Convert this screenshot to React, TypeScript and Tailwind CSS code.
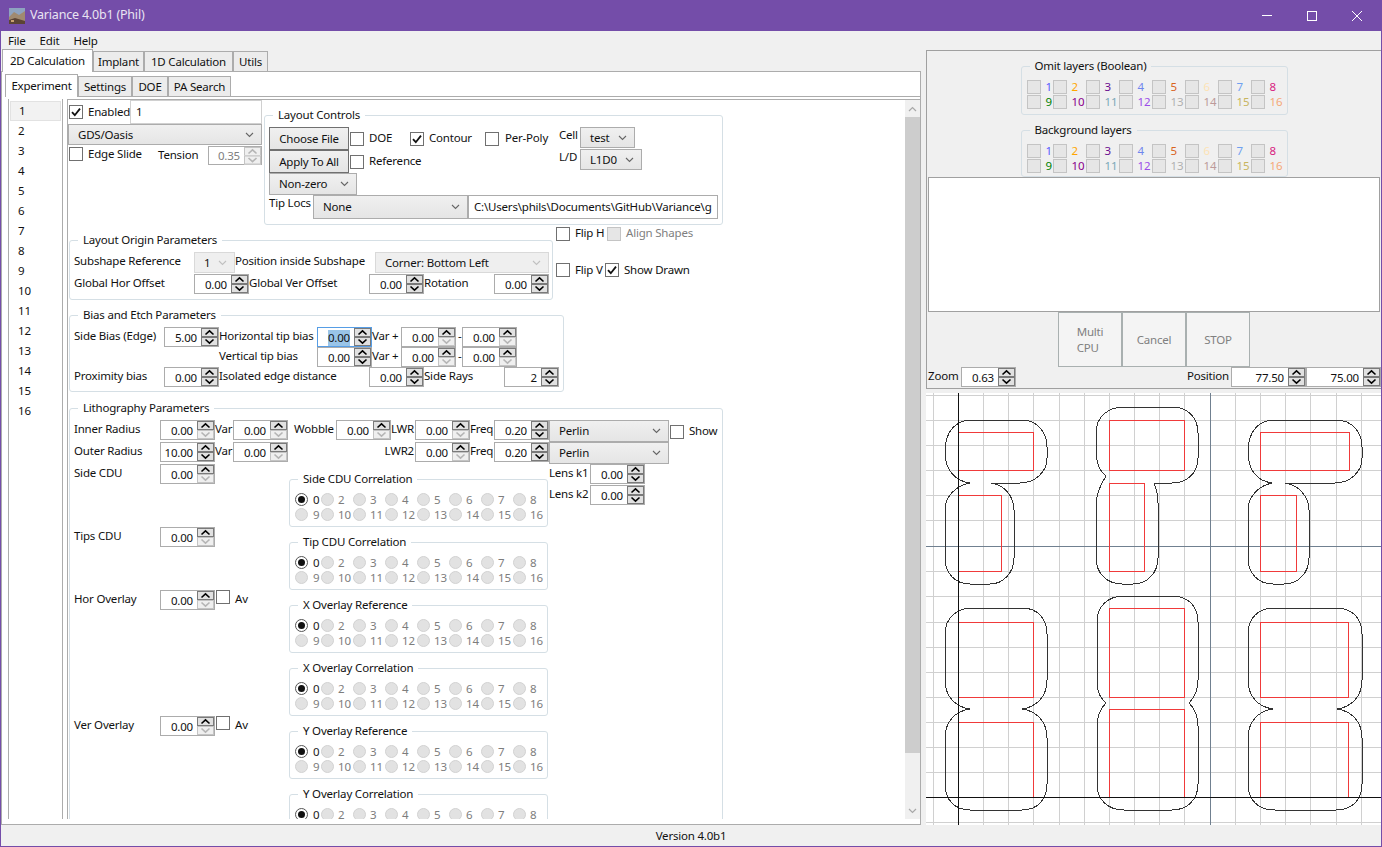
import type { ReactNode } from 'react';

type SpinState = 'on' | 'half' | 'off';

const layerColors = [
  '#5a5aff', '#ffa500', '#6a0d91', '#6f86ee', '#d9641e', '#fde3b5', '#6fa0f0', '#d81b80',
  '#008000', '#8b008b', '#7ba8b8', '#9b4de8', '#b0b0b0', '#bc9a9a', '#c8b560', '#f5a878',
];

const radioLabels = [0, 2, 3, 4, 5, 6, 7, 8, 9, 10, 11, 12, 13, 14, 15, 16];

function Lbl({ children, className = '', top = 'mt-px' }: { children: ReactNode; className?: string; top?: string }) {
  return <span className={`block shrink-0 whitespace-nowrap leading-[16px] ${top} ${className}`}>{children}</span>;
}

function Chevron({ color = '#000', width = 1.6 }: { color?: string; width?: number }) {
  return (
    <svg width="11" height="7" viewBox="0 0 11 7">
      <path d="M1.5 5.5 L5.5 1.8 L9.5 5.5" fill="none" stroke={color} strokeWidth={width} />
    </svg>
  );
}

function Spin({
  value = '0.00',
  state = 'on',
  className = 'w-[55px] h-[20px]',
  selected = false,
}: {
  value?: string;
  state?: SpinState;
  className?: string;
  selected?: boolean;
}) {
  const upOn = state !== 'off';
  const downOn = state === 'on';
  return (
    <div className={`flex shrink-0 border bg-white ${selected ? 'border-[#569de5]' : 'border-[#acacac]'} ${className}`}>
      <div className={`flex flex-1 items-center justify-end pr-[1px] pt-[1px] ${state === 'off' ? 'text-[#808080]' : ''}`}>
        <span className={selected ? 'mr-[3px] bg-[#99c4e8] leading-[16px]' : 'px-[3px] leading-[16px]'}>{value}</span>
      </div>
      <div className="flex w-[17px] flex-col">
        <div className={`flex h-1/2 items-center justify-center border ${upOn ? 'border-[#7a7a7a] bg-[#e1e1e1]' : 'border-[#c4c4c4] bg-[#efefef]'}`}>
          <Chevron color={upOn ? '#000' : '#b5b5b5'} />
        </div>
        <div className={`flex h-1/2 rotate-180 items-center justify-center border ${downOn ? 'border-[#7a7a7a] bg-[#e1e1e1]' : 'border-[#c4c4c4] bg-[#efefef]'}`}>
          <Chevron color={downOn ? '#000' : '#b5b5b5'} />
        </div>
      </div>
    </div>
  );
}

function Check({ checked = false, disabled = false, className = '' }: { checked?: boolean; disabled?: boolean; className?: string }) {
  return (
    <span className={`flex h-[14px] w-[14px] shrink-0 items-center justify-center border ${disabled ? 'border-[#c4c4c4] bg-[#e6e6e6]' : 'border-[#707070] bg-white'} ${className}`}>
      {checked && (
        <svg width="12" height="12" viewBox="0 0 12 12">
          <path d="M2 6.2 L4.8 9.2 L10 2.6" fill="none" stroke="#111" strokeWidth="1.8" />
        </svg>
      )}
    </span>
  );
}

function Combo({ label, className, disabled = false }: { label: string; className: string; disabled?: boolean }) {
  return (
    <div className={`flex shrink-0 items-center justify-between pl-[9px] pr-[7px] ${disabled ? 'border border-[#d9d9d9] bg-[#efefef]' : 'border border-[#acacac] bg-gradient-to-b from-[#f0f0f0] to-[#e5e5e5]'} ${className}`}>
      <span className="whitespace-nowrap">{label}</span>
      <svg width="9" height="6" viewBox="0 0 9 6">
        <path d="M1 1 L4.5 4.5 L8 1" fill="none" stroke={disabled ? '#c0c0c0' : '#666'} strokeWidth="1.1" />
      </svg>
    </div>
  );
}

function Btn({ children }: { children: ReactNode }) {
  return (
    <div className="flex h-[23px] w-[80px] shrink-0 items-center justify-center border border-[#707070] bg-gradient-to-b from-[#f0f0f0] to-[#e5e5e5]">
      {children}
    </div>
  );
}

function Group({ title, className, children }: { title: string; className: string; children: ReactNode }) {
  return (
    <div className={`relative shrink-0 rounded-[3px] border border-[#d5dfe5] ${className}`}>
      <span className="absolute left-[8px] top-[-9px] whitespace-nowrap bg-inherit px-[5px] leading-[16px]">{title}</span>
      {children}
    </div>
  );
}

function Radio({ checked = false }: { checked?: boolean }) {
  return (
    <span className={`flex h-[13px] w-[13px] shrink-0 items-center justify-center rounded-full border ${checked ? 'border-[#555] bg-white' : 'border-[#d2d2d2] bg-[#e2e2e2]'}`}>
      {checked && <span className="h-[7px] w-[7px] rounded-full bg-[#111]" />}
    </span>
  );
}

function RadioGroup({ title }: { title: string }) {
  return (
    <Group title={title} className="h-[48px] w-[259px] bg-white">
      <div className="grid grid-cols-[26px_repeat(7,32px)] grid-rows-[15px_15px] pl-[5px] pt-[12px]">
        {radioLabels.map((n, i) => (
          <div key={n} className="flex items-center">
            <Radio checked={i === 0} />
            <span className={`leading-[15px] ${i === 0 || i === 8 ? 'ml-[5px]' : 'ml-[4px]'} ${i === 0 ? 'text-[#222]' : 'text-[#7d7d7d]'}`}>{n}</span>
          </div>
        ))}
      </div>
    </Group>
  );
}

function LayerGroup({ title, className }: { title: string; className: string }) {
  return (
    <Group title={title} className={`w-[267px] bg-[#f0f0f0] ${className}`}>
      <div className="grid grid-cols-[26px_repeat(7,33px)] grid-rows-[15px_15px] pl-[5px] pt-[12px]">
        {layerColors.map((c, i) => (
          <div key={c} className="flex items-center">
            <Check disabled />
            <span style={{ color: c }} className="ml-[5px] leading-[15px]">{i + 1}</span>
          </div>
        ))}
      </div>
    </Group>
  );
}

function Tab({ label, active = false, className = '' }: { label: string; active?: boolean; className?: string }) {
  return (
    <div className={`flex shrink-0 items-center justify-center border border-b-0 border-[#acacac] ${active ? 'z-10 mb-[-1px] bg-white' : 'bg-[#ececec]'} ${className}`}>
      {label}
    </div>
  );
}

function TipBiasRow({ label, selected = false }: { label: string; selected?: boolean }) {
  return (
    <>
      <Lbl className="w-[98px]">{label}</Lbl>
      <Spin selected={selected} />
      <Lbl className="w-[29px]">Var +</Lbl>
      <Spin state="half" />
      <Lbl className="w-[6px] pl-[2px]">-</Lbl>
      <Spin state="half" />
    </>
  );
}

const gridX = [933, 958, 983, 1008, 1033, 1059, 1084, 1109, 1134, 1159, 1184, 1210, 1235, 1260, 1285, 1310, 1336, 1361];
const gridY = [395, 420, 445, 470, 495, 520, 546, 571, 596, 622, 647, 672, 697, 722, 747, 772, 797, 822];

const outlines = [
  'M970 483 C955 481 945 470 945 452 C945 432 955 420 972 420 L1022 420 C1037 420 1047 432 1047 447 L1047 458 C1047 472 1035 483 1020 483 L991 483 C1005 485 1014 497 1014 510 L1014 558 C1014 573 1003 584 990 584 L970 584 C955 584 945 573 945 558 L945 510 C945 497 955 486 970 483 Z',
  'M1106 476 C1098 470 1096 460 1096 450 L1096 433 C1096 417 1108 407 1124 407 L1172 407 C1188 407 1198 418 1198 433 L1198 458 C1198 473 1187 483 1172 483 L1154 483 C1157 490 1158 495 1158 503 L1158 558 C1158 573 1147 584 1133 584 L1122 584 C1107 584 1096 573 1096 558 L1096 505 C1096 495 1099 487 1106 476 Z',
  'M1272 483 C1257 481 1248 470 1248 452 C1248 432 1258 420 1275 420 L1336 420 C1352 420 1362 432 1362 447 L1362 458 C1362 472 1350 483 1335 483 L1285 483 C1299 485 1309 497 1309 510 L1309 558 C1309 573 1298 584 1284 584 L1273 584 C1258 584 1248 573 1248 558 L1248 510 C1248 497 1258 486 1272 483 Z',
  'M970 709 C955 707 945 696 945 680 L945 634 C945 618 957 608 972 608 L1022 608 C1037 608 1047 618 1047 634 L1047 680 C1047 696 1037 707 1022 709 C1037 711 1047 722 1047 738 L1047 784 C1047 800 1037 810 1022 810 L970 810 C955 810 945 800 945 784 L945 738 C945 722 955 711 970 709 Z',
  'M1106 703 C1098 696 1097 688 1097 680 L1097 622 C1097 606 1108 596 1124 596 L1172 596 C1188 596 1198 606 1198 622 L1198 680 C1198 688 1196 696 1189 703 C1196 710 1198 718 1198 726 L1198 784 C1198 800 1187 810 1172 810 L1124 810 C1108 810 1097 800 1097 784 L1097 726 C1097 718 1099 710 1106 703 Z',
  'M1273 709 C1258 707 1248 696 1248 680 L1248 634 C1248 618 1258 608 1275 608 L1336 608 C1352 608 1362 618 1362 634 L1362 680 C1362 696 1352 707 1337 709 C1352 711 1362 722 1362 738 L1362 784 C1362 800 1352 810 1336 810 L1275 810 C1258 810 1248 800 1248 784 L1248 738 C1248 722 1258 711 1273 709 Z',
];

const redRects = [
  [958, 432, 75, 38], [958, 495, 43, 76], [1109, 420, 75, 50], [1109, 483, 35, 88], [1260, 432, 89, 38], [1260, 495, 36, 76],
  [958, 622, 75, 75], [958, 722, 75, 75], [1109, 608, 75, 89], [1109, 709, 75, 88], [1260, 622, 88, 75], [1260, 722, 88, 75],
];

function Viewport() {
  return (
    <svg viewBox="926 393 455 432" className="block h-[432px] w-[455px] bg-white" shapeRendering="crispEdges">
      {gridX.map((x) => (
        <line key={x} x1={x + 0.5} x2={x + 0.5} y1={393} y2={825} stroke="#d0d0d0" />
      ))}
      {gridY.map((y) => (
        <line key={y} x1={926} x2={1381} y1={y + 0.5} y2={y + 0.5} stroke="#d0d0d0" />
      ))}
      <line x1={1210.5} x2={1210.5} y1={393} y2={825} stroke="#708090" />
      <line x1={926} x2={1381} y1={546.5} y2={546.5} stroke="#708090" />
      {redRects.map(([x, y, w, h]) => (
        <rect key={`${x}-${y}`} x={x + 0.5} y={y + 0.5} width={w} height={h} fill="none" stroke="#f03a3a" />
      ))}
      {outlines.map((d) => (
        <path key={d} d={d} fill="none" stroke="#333" />
      ))}
      <line x1={958.5} x2={958.5} y1={393} y2={825} stroke="#111" />
      <line x1={926} x2={1381} y1={797.5} y2={797.5} stroke="#111" />
    </svg>
  );
}

function Form() {
  return (
    <div className="flex-1 overflow-hidden">
      {/* top block */}
      <div className="flex h-[125px]">
        <div className="w-[196px] shrink-0">
          <div className="flex h-[24px]">
            <Check checked className="ml-px mt-[5px]" />
            <Lbl top="mt-[4px]" className="ml-[5px] w-[42px]">Enabled</Lbl>
            <div className="flex h-[24px] w-[132px] items-center border border-[#d0d0d0] bg-white pl-[5px]">1</div>
          </div>
          <Combo label="GDS/Oasis" className="h-[21px] w-[194px]" />
          <div className="flex h-[20px]">
            <Check className="ml-px mt-[2px]" />
            <Lbl className="ml-[5px] w-[70px]">Edge Slide</Lbl>
            <Lbl top="mt-[2px]" className="w-[50px]">Tension</Lbl>
            <Spin value="0.35" state="off" className="mt-px h-[19px] w-[54px]" />
          </div>
        </div>
        <Group title="Layout Controls" className="mt-[15px] h-[110px] w-[459px] bg-white">
          <div className="pl-[4px] pt-[11px]">
            <div className="flex h-[23px]">
              <Btn>Choose File</Btn>
              <Check className="ml-px mt-[5px]" />
              <Lbl top="mt-[3px]" className="ml-[5px] w-[41px]">DOE</Lbl>
              <Check checked className="mt-[5px]" />
              <Lbl top="mt-[3px]" className="ml-[5px] w-[56px]">Contour</Lbl>
              <Check className="mt-[5px]" />
              <Lbl top="mt-[3px]" className="ml-[6px] w-[54px]">Per-Poly</Lbl>
              <Lbl top="mt-0" className="w-[21px]">Cell</Lbl>
              <Combo label="test" className="h-[21px] w-[55px]" />
            </div>
            <div className="flex h-[23px]">
              <Btn>Apply To All</Btn>
              <Check className="ml-px mt-[5px]" />
              <Lbl top="mt-[3px]" className="ml-[5px] w-[190px]">Reference</Lbl>
              <Lbl top="mt-[-1px]" className="w-[21px]">L/D</Lbl>
              <Combo label="L1D0" className="mt-[-1px] h-[21px] w-[62px]" />
            </div>
            <Combo label="Non-zero" className="h-[22px] w-[88px]" />
            <div className="flex h-[24px]">
              <Lbl top="mt-0" className="w-[44px]">Tip Locs</Lbl>
              <Combo label="None" className="h-[24px] w-[155px]" />
              <div className="flex h-[24px] w-[250px] items-center overflow-hidden whitespace-nowrap border border-[#acacac] bg-white pl-[5px]">
                {'C:\\Users\\phils\\Documents\\GitHub\\Variance\\g'}
              </div>
            </div>
          </div>
        </Group>
      </div>

      {/* layout origin */}
      <div className="flex h-[75px]">
        <Group title="Layout Origin Parameters" className="ml-px mt-[15px] h-[60px] w-[484px] bg-white">
          <div className="pl-[4px] pt-[11px]">
            <div className="flex h-[21px]">
              <Lbl className="w-[120px]">Subshape Reference</Lbl>
              <Combo disabled label="1" className="h-[21px] w-[41px]" />
              <Lbl className="w-[140px]">Position inside Subshape</Lbl>
              <Combo disabled label="Corner: Bottom Left" className="h-[21px] w-[174px]" />
            </div>
            <div className="mt-px flex h-[20px]">
              <Lbl className="w-[120px]">Global Hor Offset</Lbl>
              <Spin />
              <Lbl className="w-[120px]">Global Ver Offset</Lbl>
              <Spin />
              <Lbl className="w-[70px]">Rotation</Lbl>
              <Spin />
            </div>
          </div>
        </Group>
        <div className="ml-[3px]">
          <div className="flex h-[37px] pt-px">
            <Check className="mt-[1px]" />
            <Lbl top="mt-[-1px]" className="ml-[5px] w-[32px]">Flip H</Lbl>
            <Check disabled className="mt-[1px]" />
            <Lbl top="mt-[-1px]" className="ml-[5px] text-[#808080]">Align Shapes</Lbl>
          </div>
          <div className="flex">
            <Check className="mt-[1px]" />
            <Lbl top="mt-0" className="ml-[5px] w-[30px]">Flip V</Lbl>
            <Check checked className="mt-[1px]" />
            <Lbl top="mt-0" className="ml-[5px]">Show Drawn</Lbl>
          </div>
        </div>
      </div>

      {/* bias */}
      <Group title="Bias and Etch Parameters" className="ml-px mt-[15px] h-[77px] w-[495px] bg-white">
        <div className="pl-[4px] pt-[11px]">
          <div className="flex h-[20px]">
            <Lbl className="w-[90px]">Side Bias (Edge)</Lbl>
            <Spin value="5.00" />
            <TipBiasRow label="Horizontal tip bias" selected />
          </div>
          <div className="ml-[145px] flex h-[20px]">
            <TipBiasRow label="Vertical tip bias" />
          </div>
          <div className="flex h-[20px]">
            <Lbl className="w-[90px]">Proximity bias</Lbl>
            <Spin />
            <Lbl className="w-[150px]">Isolated edge distance</Lbl>
            <Spin />
            <Lbl className="w-[80px]">Side Rays</Lbl>
            <Spin value="2" />
          </div>
        </div>
      </Group>

      {/* lithography */}
      <Group title="Lithography Parameters" className="ml-px mt-[16px] h-[520px] w-[654px] bg-white">
        <div className="pl-[4px] pt-[11px]">
          <div className="flex h-[22px]">
            <Lbl className="w-[86px]">Inner Radius</Lbl>
            <Spin state="half" />
            <Lbl className="w-[18px]">Var</Lbl>
            <Spin state="half" />
            <Lbl className="ml-[6px] w-[42px]">Wobble</Lbl>
            <Spin state="half" />
            <Lbl className="w-[24px]">LWR</Lbl>
            <Spin state="half" />
            <Lbl className="w-[24px]">Freq</Lbl>
            <Spin value="0.20" />
            <Combo label="Perlin" className="h-[22px] w-[120px]" />
            <Check className="ml-px mt-[5px]" />
            <Lbl top="mt-[3px]" className="ml-[5px]">Show</Lbl>
          </div>
          <div className="flex h-[22px]">
            <Lbl className="w-[86px]">Outer Radius</Lbl>
            <Spin value="10.00" />
            <Lbl className="w-[18px]">Var</Lbl>
            <Spin state="half" />
            <Lbl className="w-[127px] pr-px text-right">LWR2</Lbl>
            <Spin state="half" />
            <Lbl className="w-[24px]">Freq</Lbl>
            <Spin value="0.20" />
            <Combo label="Perlin" className="h-[22px] w-[120px]" />
          </div>
          <div className="flex">
            <div className="w-[215px] shrink-0">
              <div className="flex h-[20px]">
                <Lbl className="w-[86px]">Side CDU</Lbl>
                <Spin state="half" />
              </div>
              <div className="mt-[43px] flex h-[20px]">
                <Lbl className="w-[86px]">Tips CDU</Lbl>
                <Spin state="half" />
              </div>
              <div className="mt-[43px] flex h-[20px]">
                <Lbl className="w-[86px]">Hor Overlay</Lbl>
                <Spin state="half" />
                <Check className="ml-px" />
                <Lbl className="ml-[5px]">Av</Lbl>
              </div>
              <div className="mt-[106px] flex h-[20px]">
                <Lbl className="w-[86px]">Ver Overlay</Lbl>
                <Spin state="half" />
                <Check className="ml-px" />
                <Lbl className="ml-[5px]">Av</Lbl>
              </div>
            </div>
            <div className="flex w-[260px] shrink-0 flex-col gap-[15px] pt-[15px]">
              <RadioGroup title="Side CDU Correlation" />
              <RadioGroup title="Tip CDU Correlation" />
              <RadioGroup title="X Overlay Reference" />
              <RadioGroup title="X Overlay Correlation" />
              <RadioGroup title="Y Overlay Reference" />
              <RadioGroup title="Y Overlay Correlation" />
            </div>
            <div>
              <div className="flex h-[21px]">
                <Lbl className="w-[41px]">Lens k1</Lbl>
                <Spin />
              </div>
              <div className="flex h-[20px]">
                <Lbl className="w-[41px]">Lens k2</Lbl>
                <Spin />
              </div>
            </div>
          </div>
        </div>
      </Group>
    </div>
  );
}

function Scrollbar() {
  return (
    <div className="flex w-[15px] shrink-0 flex-col bg-[#f0f0f0]">
      <div className="flex h-[17px] items-center justify-center">
        <svg width="9" height="6" viewBox="0 0 9 6">
          <path d="M1 5 L4.5 1.5 L8 5" fill="none" stroke="#a8a8a8" strokeWidth="1.2" />
        </svg>
      </div>
      <div className="h-[636px] bg-[#cdcdcd]" />
      <div className="flex-1" />
      <div className="flex h-[17px] items-center justify-center">
        <svg width="9" height="6" viewBox="0 0 9 6">
          <path d="M1 1 L4.5 4.5 L8 1" fill="none" stroke="#a8a8a8" strokeWidth="1.2" />
        </svg>
      </div>
    </div>
  );
}

export default function App() {
  return (
    <div className="flex h-[847px] w-[1382px] flex-col overflow-hidden border-x border-b border-[#744da9] bg-[#f0f0f0] font-['Noto_Sans',sans-serif] text-[11.5px] tracking-[-0.2px] text-[#111]">
      {/* title bar */}
      <div className="flex h-[31px] shrink-0 items-center bg-[#744da9] text-[12.5px] text-[#e9e4f2]">
        <svg width="16" height="16" viewBox="0 0 16 16" className="ml-[8px]">
          <rect width="16" height="16" fill="#8ea3c0" />
          <path d="M0 9 L5 4 L10 7 L16 3 L16 16 L0 16 Z" fill="#a08a70" />
          <path d="M0 12 L6 10 L16 13 L16 16 L0 16 Z" fill="#5c4434" />
          <rect x="2" y="12" width="3" height="2" fill="#c9a070" />
        </svg>
        <span className="ml-[5px]">Variance 4.0b1 (Phil)</span>
        <div className="ml-auto flex items-center pr-[19px]">
          <span className="h-px w-[10px] bg-white" />
          <span className="ml-[35px] h-[10px] w-[10px] border border-white" />
          <svg width="10" height="10" viewBox="0 0 10 10" className="ml-[35px]">
            <path d="M0 0 L10 10 M10 0 L0 10" stroke="#fff" strokeWidth="1" />
          </svg>
        </div>
      </div>

      {/* menu */}
      <div className="flex h-[19px] shrink-0 items-center gap-[14px] pl-[7px] pt-[1px] text-[#111]">
        <span>File</span>
        <span>Edit</span>
        <span>Help</span>
      </div>

      {/* body */}
      <div className="flex h-[775px] shrink-0">
        <div className="w-[925px] shrink-0">
          <div className="flex h-[21px] items-end pl-px">
            <Tab active label="2D Calculation" className="h-[23px] w-[91px]" />
            <Tab label="Implant" className="h-[20px] w-[51px]" />
            <Tab label="1D Calculation" className="h-[20px] w-[89px]" />
            <Tab label="Utils" className="h-[20px] w-[35px]" />
          </div>
          <div className="h-[754px] w-[920px] border border-[#acacac] bg-white pl-[3px]">
            <div className="flex h-[24px] items-end">
              <Tab active label="Experiment" className="h-[23px] w-[73px]" />
              <Tab label="Settings" className="h-[20px] w-[54px]" />
              <Tab label="DOE" className="h-[20px] w-[36px]" />
              <Tab label="PA Search" className="h-[20px] w-[63px]" />
            </div>
            <div className="flex h-[723px] w-[915px] border-t border-[#acacac] pt-[2px] pl-[3px]">
              <div className="w-[55px] shrink-0 border-x border-[#acacac] px-px pt-[2px]">
                {Array.from({ length: 16 }, (_, i) => (
                  <div key={i} className={`flex h-[20px] items-center pl-[8px] ${i === 0 ? 'border border-[#e2e2e2] bg-[#f2f2f2]' : ''}`}>
                    {i + 1}
                  </div>
                ))}
              </div>
              <div className="ml-[4px] flex flex-1 border-l border-t border-[#acacac]">
                <Form />
                <Scrollbar />
              </div>
            </div>
          </div>
        </div>

        {/* right side */}
        <div className="flex-1">
          <div className="flex h-[339px] flex-col border border-[#a0a0a0]">
            <div className="flex flex-col items-center pt-[15px]">
              <LayerGroup title="Omit layers (Boolean)" className="h-[49px]" />
              <LayerGroup title="Background layers" className="mt-[15px] h-[47px]" />
            </div>
            <div className="mx-px h-[135px] border border-[#a0a0a0] bg-white" />
            <div className="flex justify-center">
              <div className="flex h-[55px] w-[64px] items-center justify-center border border-[#a9b0b0] bg-[#f4f4f4] text-[#808080]">
                <span className="block leading-[16px]">Multi<br />CPU</span>
              </div>
              <div className="flex h-[55px] w-[64px] items-center justify-center border border-[#a9b0b0] bg-[#f4f4f4] text-[#808080]">Cancel</div>
              <div className="flex h-[55px] w-[64px] items-center justify-center border border-[#a9b0b0] bg-[#f4f4f4] text-[#808080]">STOP</div>
            </div>
            <div className="flex h-[20px] pl-px">
              <Lbl className="w-[33px]">Zoom</Lbl>
              <Spin value="0.63" className="h-[20px] w-[55px]" />
              <Lbl className="ml-[171px] w-[44px]">Position</Lbl>
              <Spin value="77.50" className="h-[20px] w-[75px]" />
              <Spin value="75.00" className="h-[20px] w-[75px]" />
            </div>
          </div>
          <div className="mt-[4px]">
            <Viewport />
          </div>
        </div>
      </div>

      {/* status */}
      <div className="flex flex-1 items-center justify-center">Version 4.0b1</div>
    </div>
  );
}
